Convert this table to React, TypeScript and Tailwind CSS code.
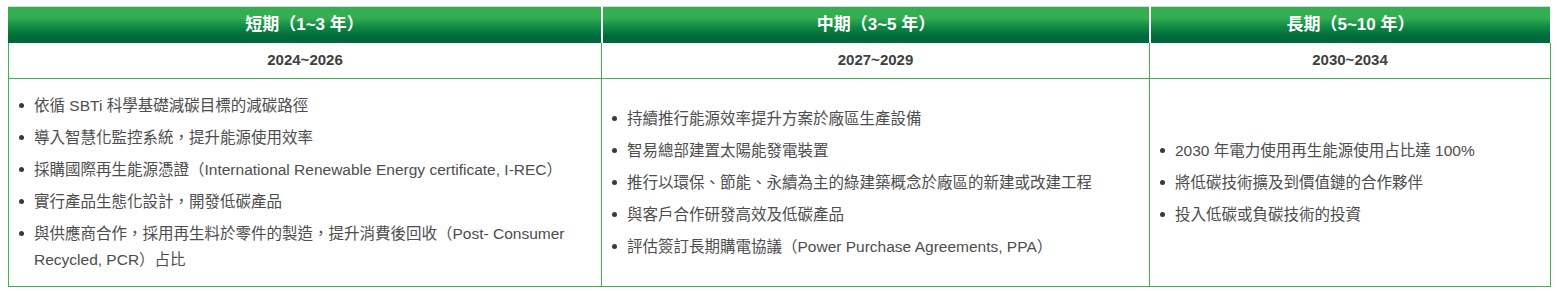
import React from "react";

interface Phase {
  title: string;
  years: string;
  items: string[];
}

const phases: Phase[] = [
  {
    title: "短期（1~3 年）",
    years: "2024~2026",
    items: [
      "依循 SBTi 科學基礎減碳目標的減碳路徑",
      "導入智慧化監控系統，提升能源使用效率",
      "採購國際再生能源憑證（International Renewable Energy certificate, I-REC）",
      "實行產品生態化設計，開發低碳產品",
      "與供應商合作，採用再生料於零件的製造，提升消費後回收（Post- Consumer Recycled, PCR）占比",
    ],
  },
  {
    title: "中期（3~5 年）",
    years: "2027~2029",
    items: [
      "持續推行能源效率提升方案於廠區生產設備",
      "智易總部建置太陽能發電裝置",
      "推行以環保、節能、永續為主的綠建築概念於廠區的新建或改建工程",
      "與客戶合作研發高效及低碳產品",
      "評估簽訂長期購電協議（Power Purchase Agreements, PPA）",
    ],
  },
  {
    title: "長期（5~10 年）",
    years: "2030~2034",
    items: [
      "2030 年電力使用再生能源使用占比達 100%",
      "將低碳技術擴及到價值鏈的合作夥伴",
      "投入低碳或負碳技術的投資",
    ],
  },
];

const BulletList: React.FC<{ items: string[] }> = ({ items }) => (
  <ul className="flex flex-col gap-[6px] pl-[10px] pr-4">
    {items.map((item, i) => (
      <li key={i} className="flex items-start">
        <span className="mt-[10px] mr-[10px] h-[5px] w-[5px] shrink-0 rounded-full bg-[#3a3a3a]" />
        <span className="text-[15.5px] leading-[26px] text-[#4d4d4d]">{item}</span>
      </li>
    ))}
  </ul>
);

export default function App() {
  return (
    <div className="bg-white min-h-[291px] pt-[6px] pl-[8px] font-['Liberation_Sans','Noto_Sans_CJK_TC',sans-serif]">
      <div className="grid w-[1543px] grid-cols-[593px_548px_402px]">
        {/* header row */}
        {phases.map((p, i) => (
          <div
            key={p.title}
            className={`flex h-[37px] items-center justify-center border-t border-[#d9d9d9] bg-[linear-gradient(to_bottom,#35ae52_30%,#0f8a45_55%,#00693a_82%)] text-[17px] font-bold text-white ${
              i > 0 ? "border-l-2 border-l-white" : ""
            } ${i === 2 ? "mr-[1px]" : ""}`}
          >
            {p.title}
          </div>
        ))}

        {/* years row */}
        {phases.map((p, i) => (
          <div
            key={p.years}
            className={`flex h-[36px] items-center justify-center border-b border-l border-[#3db54a] text-[15px] font-bold text-[#404040] ${
              i === 2 ? "border-r" : ""
            }`}
          >
            {p.years}
          </div>
        ))}

        {/* body row */}
        {phases.map((p, i) => (
          <div
            key={p.years + "-body"}
            className={`flex h-[208px] flex-col justify-center border-b border-l border-[#3db54a] ${
              i === 2 ? "border-r" : ""
            }`}
          >
            <BulletList items={p.items} />
          </div>
        ))}
      </div>
    </div>
  );
}
